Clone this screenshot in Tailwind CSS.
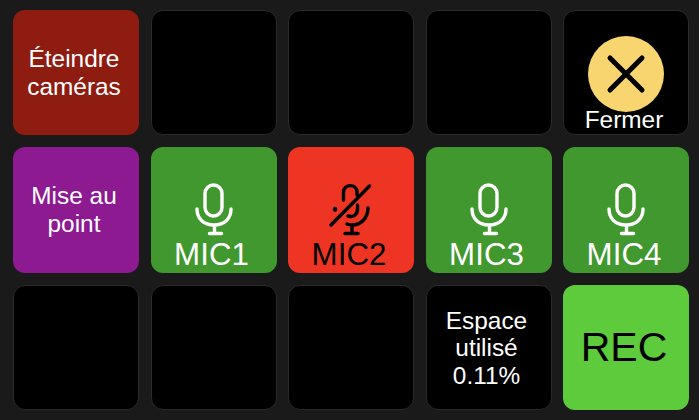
<!DOCTYPE html>
<html lang="fr">
<head>
  <meta charset="UTF-8" />
  <title>Stream Deck</title>
  <script src="https://cdn.jsdelivr.net/npm/@tailwindcss/browser@4"></script>
</head>
<body class="bg-[#1a1a1a] font-['Liberation_Sans',sans-serif] overflow-hidden">
  <div class="w-[699px] h-[420px] pl-[13px] pt-[9.6px] grid grid-cols-[repeat(5,126px)] grid-rows-[repeat(3,125.5px)] gap-x-[11.5px] gap-y-[12px]">

    <div class="rounded-[12px] bg-[#8e1c10] text-white text-[24.4px] leading-[28px] text-center flex items-center justify-center pr-[4px] pt-[2px]">Éteindre<br>caméras</div>
    <div class="rounded-[12px] bg-black border border-[#2a2a2a]"></div>
    <div class="rounded-[12px] bg-black border border-[#2a2a2a]"></div>
    <div class="rounded-[12px] bg-black border border-[#2a2a2a]"></div>
    <div class="rounded-[12px] bg-black border border-[#2a2a2a] flex flex-col items-center justify-end text-white">
      <svg class="w-[76px] h-[76px] -mb-[6px]" viewBox="0 0 76 76">
        <circle cx="38" cy="38" r="38" fill="#f8d56e"/>
        <path d="M22 22 L54 54 M54 22 L22 54" stroke="#000" stroke-width="5" stroke-linecap="round"/>
      </svg>
      <span class="text-[24.4px] leading-[28px] mr-[4px] relative">Fermer</span>
    </div>

    <div class="rounded-[12px] bg-[#8d1a91] text-white text-[24.4px] leading-[28px] text-center flex items-center justify-center pr-[4px]">Mise au<br>point</div>
    <div class="rounded-[12px] bg-[#41982e] text-white flex flex-col items-center justify-end">
      <svg class="w-[40px] h-[54px]" viewBox="0 0 40 54" fill="none" stroke="currentColor" stroke-width="3.4" stroke-linecap="round">
        <rect x="11" y="2" width="17" height="31" rx="8.5"/>
        <path d="M3 26 C3 36 10 42 20 42 C30 42 37 36 37 26 M20.5 42 V50.5 M15.5 50.5 H27.5"/>
      </svg>
      <span class="text-[31.3px] leading-[36px] mr-[4px]">MIC1</span>
    </div>
    <div class="rounded-[12px] bg-[#ee3524] text-black flex flex-col items-center justify-end">
      <svg class="w-[44px] h-[54px]" viewBox="0 0 44 54" fill="none" stroke="currentColor" stroke-width="3.4" stroke-linecap="round">
        <path d="M14.5 17 V9 C14.5 0.5 28 0.5 28 9 V12"/>
        <path d="M28.5 22 V26 C28.5 32 24 34.5 19 33"/>
        <path d="M6 26 V26.5" stroke-width="4.4"/>
        <path d="M39 25 C39 35 32 42 23 42 C21 42 19.5 41.7 18 41 M23 42 V50.5 M16 50.5 H29"/>
        <path d="M2 42 L40.5 3"/>
      </svg>
      <span class="text-[31.3px] leading-[36px] mr-[4px]">MIC2</span>
    </div>
    <div class="rounded-[12px] bg-[#41982e] text-white flex flex-col items-center justify-end">
      <svg class="w-[40px] h-[54px]" viewBox="0 0 40 54" fill="none" stroke="currentColor" stroke-width="3.4" stroke-linecap="round">
        <rect x="11" y="2" width="17" height="31" rx="8.5"/>
        <path d="M3 26 C3 36 10 42 20 42 C30 42 37 36 37 26 M20.5 42 V50.5 M15.5 50.5 H27.5"/>
      </svg>
      <span class="text-[31.3px] leading-[36px] mr-[4px]">MIC3</span>
    </div>
    <div class="rounded-[12px] bg-[#41982e] text-white flex flex-col items-center justify-end">
      <svg class="w-[40px] h-[54px]" viewBox="0 0 40 54" fill="none" stroke="currentColor" stroke-width="3.4" stroke-linecap="round">
        <rect x="11" y="2" width="17" height="31" rx="8.5"/>
        <path d="M3 26 C3 36 10 42 20 42 C30 42 37 36 37 26 M20.5 42 V50.5 M15.5 50.5 H27.5"/>
      </svg>
      <span class="text-[31.3px] leading-[36px] mr-[4px]">MIC4</span>
    </div>

    <div class="rounded-[12px] bg-black border border-[#2a2a2a]"></div>
    <div class="rounded-[12px] bg-black border border-[#2a2a2a]"></div>
    <div class="rounded-[12px] bg-black border border-[#2a2a2a]"></div>
    <div class="rounded-[12px] bg-black border border-[#2a2a2a] text-white text-[24.4px] leading-[27.5px] text-center flex items-center justify-center pr-[4px] pt-[1px]">Espace<br>utilisé<br>0.11%</div>
    <div class="rounded-[12px] bg-[#5dcb3c] text-black text-[41px] text-center flex items-center justify-center pr-[4px]">REC</div>
  </div>
</body>
</html>
